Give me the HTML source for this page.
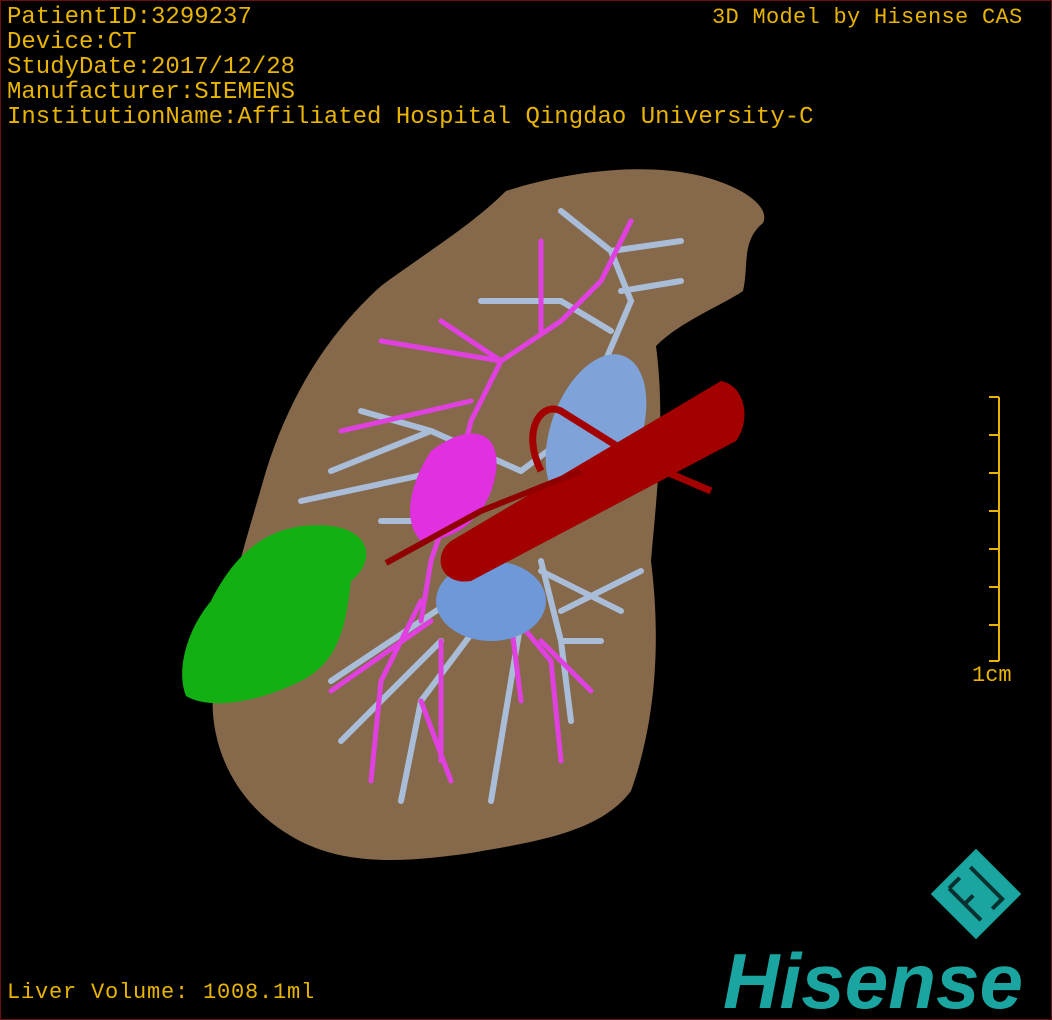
<!DOCTYPE html>
<html><head><meta charset="utf-8"><style>
html,body{margin:0;padding:0;background:#000;}
#w{position:relative;width:1050px;height:1018px;border:1px solid #6a1010;overflow:hidden;background:#000;}
.t{position:absolute;font-family:"Liberation Mono",monospace;color:#e8b400;font-size:24px;letter-spacing:0;white-space:pre;line-height:25px;}
svg{position:absolute;left:0;top:0;}
</style></head><body><div id="w">
<svg width="1050" height="1018" viewBox="0 0 1050 1018">
<path d="M505,190 C560,172 640,160 700,175 C740,185 770,205 762,222 C740,240 748,265 742,290 C720,305 680,320 655,345 C665,420 655,500 650,560 C660,640 655,720 630,790 C600,830 540,840 470,852 C400,862 340,865 290,835 C230,800 208,740 212,690 C222,610 245,540 265,470 C290,390 330,330 380,285 C420,255 470,225 505,190 Z" fill="#85694a"/>
<g stroke="#a9bdd8" stroke-width="6" fill="none" stroke-linecap="round">
<path d="M560,210 L610,250 L630,300 L600,370 L560,440 L520,470"/>
<path d="M610,250 L680,240 M620,290 L680,280 M480,300 L560,300 L610,330"/>
<path d="M520,470 L430,430 L360,410 M430,430 L330,470 M440,470 L300,500 M450,520 L380,520"/>
<path d="M540,560 L560,640 L600,640 M560,640 L570,720 M520,620 L500,740 M480,620 L420,700 L400,800 M440,640 L340,740 M450,600 L330,680 M500,740 L490,800"/>
<path d="M540,570 L620,610 M560,610 L640,570"/>
</g>
<g stroke="#e040e0" stroke-width="5" fill="none" stroke-linecap="round">
<path d="M630,220 L600,280 L560,320 L500,360 L470,420 L450,500 L430,560 L420,620"/>
<path d="M500,360 L440,320 M500,360 L380,340 M470,400 L340,430 M540,330 L540,240"/>
<path d="M420,600 L380,680 L370,780 M430,620 L330,690 M440,640 L440,760 M420,700 L450,780"/>
<path d="M500,600 L550,660 L560,760 M540,640 L590,690 M510,620 L520,700"/>
</g>
<path d="M430,450 C470,420 500,430 495,470 C490,510 460,540 420,540 C400,520 410,480 430,450 Z" fill="#e030e0"/>
<ellipse cx="595" cy="430" rx="45" ry="80" fill="#7fa3d8" transform="rotate(20 595 430)"/>
<ellipse cx="490" cy="600" rx="55" ry="40" fill="#6f98d8"/>
<path d="M450,540 L720,380 C745,385 750,420 735,440 L470,580 C440,585 430,555 450,540 Z" fill="#a30000"/>
<path d="M540,470 C520,430 540,400 560,410 L640,460 L710,490" stroke="#a30000" stroke-width="7" fill="none"/>
<path d="M385,562 L480,510 L580,470" stroke="#900000" stroke-width="6" fill="none"/>
<path d="M210,600 C240,540 280,520 330,525 C370,530 375,560 350,580 C345,620 340,660 300,680 C260,700 210,710 185,695 C175,670 185,630 210,600 Z" fill="#13b013"/>
<g stroke="#e8b400" stroke-width="2" fill="none">
<path d="M998,396 L998,660"/>
<path d="M988,396 H998 M988,434 H998 M988,472 H998 M988,510 H998 M988,548 H998 M988,586 H998 M988,624 H998 M988,660 H998"/>
</g>
<g transform="rotate(-45 975 893)">
<rect x="943" y="861" width="64" height="64" fill="#1aa5a0"/>
<path d="M960,870 V915 M960,870 H975 M960,892 H972 M990,870 V915 H976" stroke="#08302e" stroke-width="4" fill="none"/>
</g>
<text x="722" y="1007" font-family="Liberation Sans,sans-serif" font-weight="bold" font-style="italic" font-size="78" fill="#1aa5a0" textLength="300" lengthAdjust="spacingAndGlyphs">Hisense</text>
</svg>
<div class="t" style="left:6px;top:4px">PatientID:3299237
Device:CT
StudyDate:2017/12/28
Manufacturer:SIEMENS
InstitutionName:Affiliated Hospital Qingdao University-C</div>
<div class="t" style="left:711px;top:4px;font-size:22px;letter-spacing:0.3px">3D Model by Hisense CAS</div>
<div class="t" style="left:971px;top:662px;font-size:22px">1cm</div>
<div class="t" style="left:6px;top:979px;font-size:22px;letter-spacing:0.8px">Liver Volume: 1008.1ml</div>
</div></body></html>
